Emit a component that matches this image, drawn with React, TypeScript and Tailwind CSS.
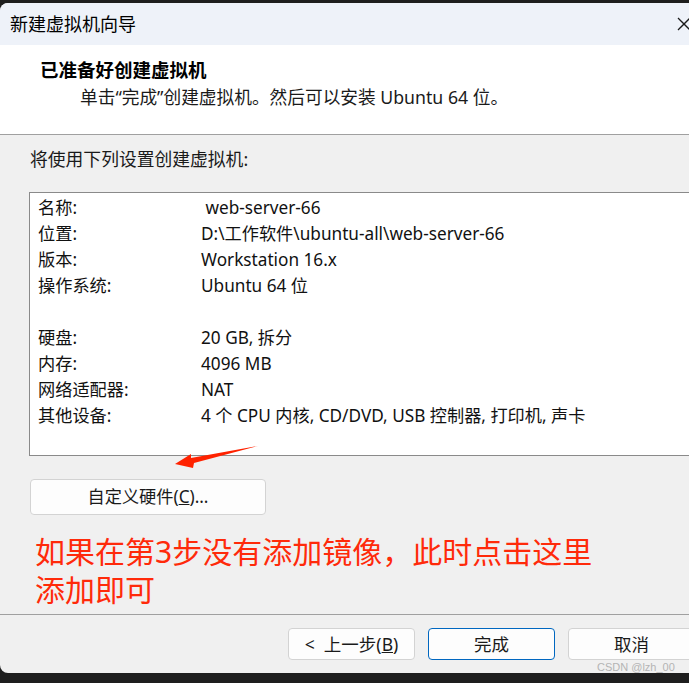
import React from 'react'

const ui = { fontFamily: '"Noto Sans", "Noto Sans CJK SC", sans-serif' }

// --- settings rows ---

const rows: ([string, string] | null)[] = [
  ['名称:', ' web-server-66'],
  ['位置:', 'D:\\工作软件\\ubuntu-all\\web-server-66'],
  ['版本:', 'Workstation 16.x'],
  ['操作系统:', 'Ubuntu 64 位'],
  null,
  ['硬盘:', '20 GB, 拆分'],
  ['内存:', '4096 MB'],
  ['网络适配器:', 'NAT'],
  ['其他设备:', '4 个 CPU 内核, CD/DVD, USB 控制器, 打印机, 声卡'],
]

function WinButton({
  children,
  primary,
  className = '',
}: {
  children: React.ReactNode
  primary?: boolean
  className?: string
}) {
  return (
    <button
      className={`flex items-center justify-center rounded-[4px] bg-[#fdfdfd] text-[#1a1a1a] border ${
        primary ? 'border-[#0067c0]' : 'border-[#d3d3d3]'
      } ${className}`}
    >
      {children}
    </button>
  )
}

export default function App() {
  return (
    <div className="relative w-[689px] h-[683px] overflow-hidden bg-[#1e1e1e] pt-[3px]" style={ui}>
      <div className="w-[700px] h-[670px] rounded-l-[8px] overflow-hidden bg-[#f0f0f0] flex flex-col">
        {/* title bar */}
        <div className="h-[42px] shrink-0 bg-[#eef2f9] flex items-center justify-between pl-[10px] pr-[9px]">
          <span className="text-[18px] text-black leading-none">新建虚拟机向导</span>
          <svg width="14" height="14" viewBox="0 0 14 14" stroke="#1a1a1a" strokeWidth="1.3">
            <line x1="1" y1="1" x2="13" y2="13" />
            <line x1="13" y1="1" x2="1" y2="13" />
          </svg>
        </div>

        {/* header */}
        <div className="h-[90px] shrink-0 bg-white border-b border-[#a0a0a0]">
          <div className="pt-[13px] pl-[40px] text-[18.5px] font-bold leading-[24px] text-black">
            已准备好创建虚拟机
          </div>
          <div className="mt-[3px] pl-[80px] text-[17.7px] leading-[24px] text-[#1a1a1a]">
            单击“完成”创建虚拟机。然后可以安装 Ubuntu 64 位。
          </div>
        </div>

        {/* body */}
        <div className="h-[479px] shrink-0 flex flex-col">
          <div className="pt-[12px] pl-[30px] text-[17.8px] leading-[24px] text-[#1a1a1a]">
            将使用下列设置创建虚拟机:
          </div>
          <div className="mt-[21px] ml-[29px] h-[264px] bg-white border border-[#8a8a8a] pt-[2px] pl-[8px]">
            {rows.map((r, i) =>
              r ? (
                <div key={i} className="flex h-[26px] items-center text-[17.2px] text-[#111]">
                  <span className="w-[163px] shrink-0">{r[0]}</span>
                  <span className="whitespace-pre">{r[1]}</span>
                </div>
              ) : (
                <div key={i} className="h-[26px]" />
              )
            )}
          </div>
          <WinButton className="mt-[23px] ml-[30px] w-[236px] h-[36px] text-[17.2px]">
            自定义硬件(<span className="underline">C</span>)...
          </WinButton>
          <div className="mt-[18px] pl-[35px] text-[30px] leading-[38px] text-[#ff2a0a]">
            如果在第3步没有添加镜像，此时点击这里
            <br />
            添加即可
          </div>
        </div>

        {/* footer */}
        <div className="flex-1 border-t border-[#a0a0a0] pt-[13px] pl-[288px] flex gap-[13px]">
          <WinButton className="w-[127px] h-[32px] text-[17.5px]">
            &lt;&nbsp; 上一步(<span className="underline">B</span>)
          </WinButton>
          <WinButton primary className="w-[127px] h-[32px] text-[17.5px]">
            完成
          </WinButton>
          <WinButton className="w-[127px] h-[32px] text-[17.5px]">取消</WinButton>
        </div>
      </div>

      {/* annotation arrow */}
      <svg className="absolute left-0 top-0 pointer-events-none" width="689" height="683" viewBox="0 0 689 683">
        <polygon points="175,464 191,454 191,458 258,446 194,463 193,468" fill="#ff2200" />
      </svg>

      <span
        className="absolute left-[597px] top-[660px] text-[11px] leading-[14px] text-[#b4b4b4]"
        style={{ fontFamily: '"Liberation Sans", Arial, sans-serif' }}
      >
        CSDN @lzh_00
      </span>
    </div>
  )
}
